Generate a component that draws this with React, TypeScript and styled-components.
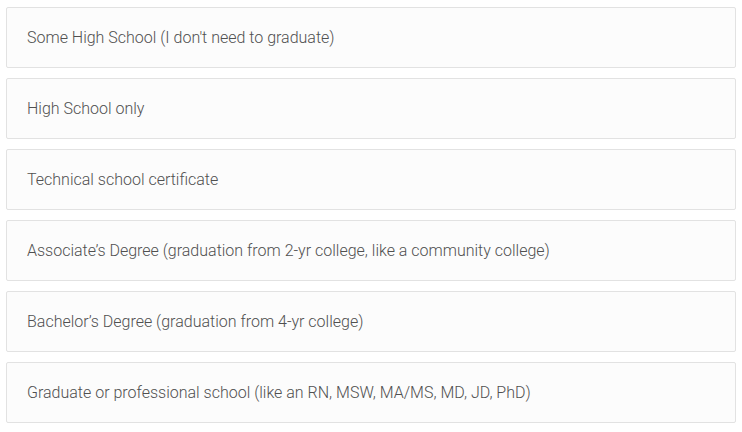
import styled, { createGlobalStyle } from 'styled-components';

const GlobalStyle = createGlobalStyle`
  body {
    margin: 0;
    background: #ffffff;
    font-family: Roboto, "Noto Sans", sans-serif;
  }
`;

const OptionList = styled.div`
  display: flex;
  flex-direction: column;
  gap: 10px;
  padding: 7px 6px;
`;

const Option = styled.button`
  display: flex;
  align-items: center;
  height: 61px;
  box-sizing: border-box;
  padding: 0 20px;
  border: 1px solid #e2e2e2;
  border-radius: 2px;
  background: #fcfcfc;
  color: #505050;
  font-family: Roboto, "Noto Sans", sans-serif;
  font-weight: 300;
  font-size: 16px;
  text-align: left;
  cursor: pointer;
`;

const options = [
  "Some High School (I don't need to graduate)",
  'High School only',
  'Technical school certificate',
  'Associate\u2019s Degree (graduation from 2-yr college, like a community college)',
  'Bachelor\u2019s Degree (graduation from 4-yr college)',
  'Graduate or professional school (like an RN, MSW, MA/MS, MD, JD, PhD)',
];

export default function App() {
  return (
    <>
      <GlobalStyle />
      <OptionList>
        {options.map((o) => (
          <Option key={o}>{o}</Option>
        ))}
      </OptionList>
    </>
  );
}
